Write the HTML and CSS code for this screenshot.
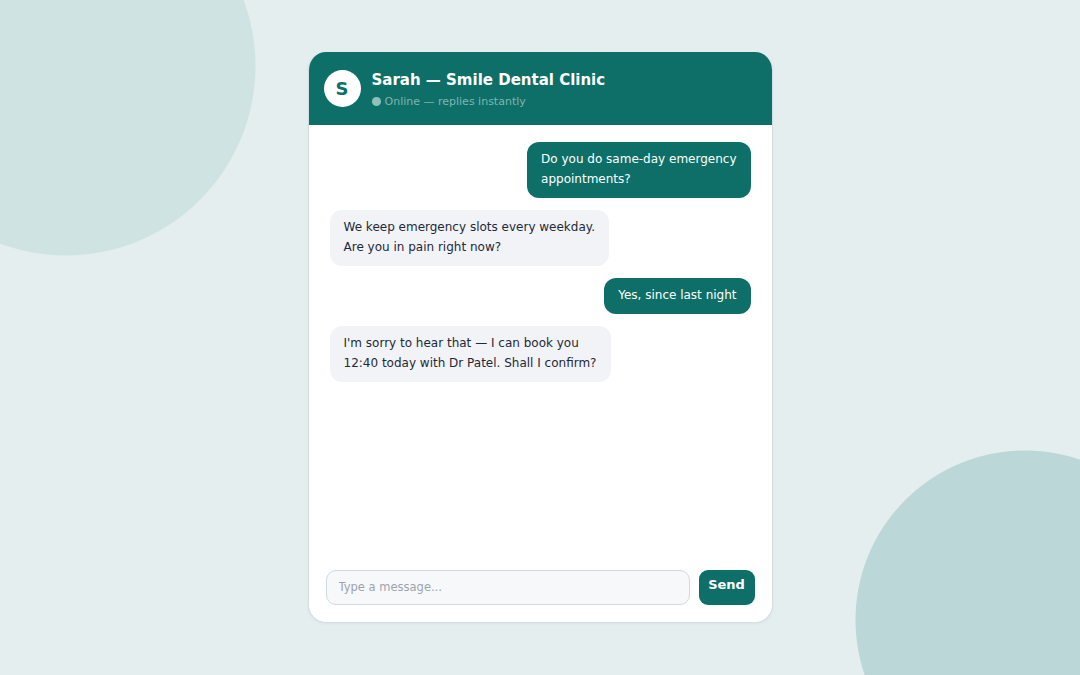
FILE: index.html
```html
<!DOCTYPE html>
<html lang="en">
<head>
<meta charset="utf-8">
<title>Smile Dental Clinic — Chat</title>
<link rel="stylesheet" href="styles.css">
</head>
<body>
  <main class="chat">
    <header class="chat-header">
      <div class="avatar">S</div>
      <div class="who">
        <div class="name">Sarah — Smile Dental Clinic</div>
        <div class="status"><span class="dot"></span>Online — replies instantly</div>
      </div>
    </header>

    <section class="messages">
      <div class="bubble user">Do you do same-day emergency<br>appointments?</div>
      <div class="bubble bot">We keep emergency slots every weekday.<br>Are you in pain right now?</div>
      <div class="bubble user">Yes, since last night</div>
      <div class="bubble bot">I'm sorry to hear that — I can book you<br>12:40 today with Dr Patel. Shall I confirm?</div>
    </section>

    <form class="composer">
      <input class="field" type="text" placeholder="Type a message...">
      <button class="send" type="button">Send</button>
    </form>
  </main>
</body>
</html>
```

FILE: styles.css
```css
* {
  box-sizing: border-box;
}

html, body {
  margin: 0;
  height: 100%;
}

body {
  font-family: "DejaVu Sans", "Liberation Sans", sans-serif;
  color: #1f2937;
  background-color: #e5eeef;
  background-image:
    radial-gradient(circle 190px at 66px 66px, #cfe3e2 99.4%, transparent 100%),
    radial-gradient(circle 170px at 1025px 620px, #bcd7d7 99.4%, transparent 100%);
  background-repeat: no-repeat;
  display: flex;
  align-items: flex-start;
  justify-content: center;
  padding-top: 52px;
  overflow: hidden;
}

.chat {
  width: 465px;
  height: 571px;
  background: #ffffff;
  border: 1px solid #d3dee3;
  border-top: none;
  border-radius: 18px;
  overflow: hidden;
  display: flex;
  flex-direction: column;
  box-shadow: 0 1px 3px rgba(15, 60, 60, 0.05);
}

/* header */
.chat-header {
  background: #0e6f69;
  height: 73px;
  flex: none;
  display: flex;
  align-items: center;
  gap: 11px;
  padding: 0 16px 0 15px;
  margin: 0 -1px;
  color: #ffffff;
}

.avatar {
  width: 37px;
  height: 37px;
  border-radius: 50%;
  background: #ffffff;
  color: #0e6f69;
  display: flex;
  align-items: center;
  justify-content: center;
  font-weight: 700;
  font-size: 18px;
  flex: none;
  margin-left: 1px;
}

.who {
  display: flex;
  flex-direction: column;
  gap: 6px;
  margin-top: 2px;
}

.name {
  font-weight: 700;
  font-size: 15px;
  line-height: 18px;
}

.status {
  font-size: 11px;
  line-height: 14px;
  color: #7fb5b0;
  display: flex;
  align-items: center;
  gap: 4px;
}

.dot {
  width: 9px;
  height: 9px;
  border-radius: 50%;
  background: #8fc0bb;
  display: inline-block;
}

/* message list */
.messages {
  flex: 1;
  display: flex;
  flex-direction: column;
  align-items: flex-start;
  gap: 12px;
  padding: 17px 21px 16px;
}

.bubble {
  font-size: 12px;
  line-height: 20px;
  padding: 7px 14px 9px;
  border-radius: 12px;
}

.bubble.user {
  align-self: flex-end;
  background: #0e6f69;
  color: #ffffff;
}

.bubble.bot {
  background: #f1f3f7;
  color: #1f2937;
}

/* composer */
.composer {
  flex: none;
  display: flex;
  gap: 9px;
  padding: 16px 17px 17px 17px;
  margin: 0;
}

.field {
  flex: 1;
  height: 35px;
  border: 1px solid #cfd9e3;
  border-radius: 10px;
  background: #f6f8fa;
  padding: 0 12px 2px;
  font-family: inherit;
  font-size: 11.5px;
  color: #1f2937;
  outline: none;
}

.field::placeholder {
  color: #9ca3af;
}

.send {
  width: 56px;
  height: 35px;
  border: none;
  border-radius: 9px;
  background: #0e6f69;
  color: #ffffff;
  font-family: inherit;
  font-weight: 700;
  font-size: 13px;
  padding: 0 0 6px;
  cursor: pointer;
}
```
